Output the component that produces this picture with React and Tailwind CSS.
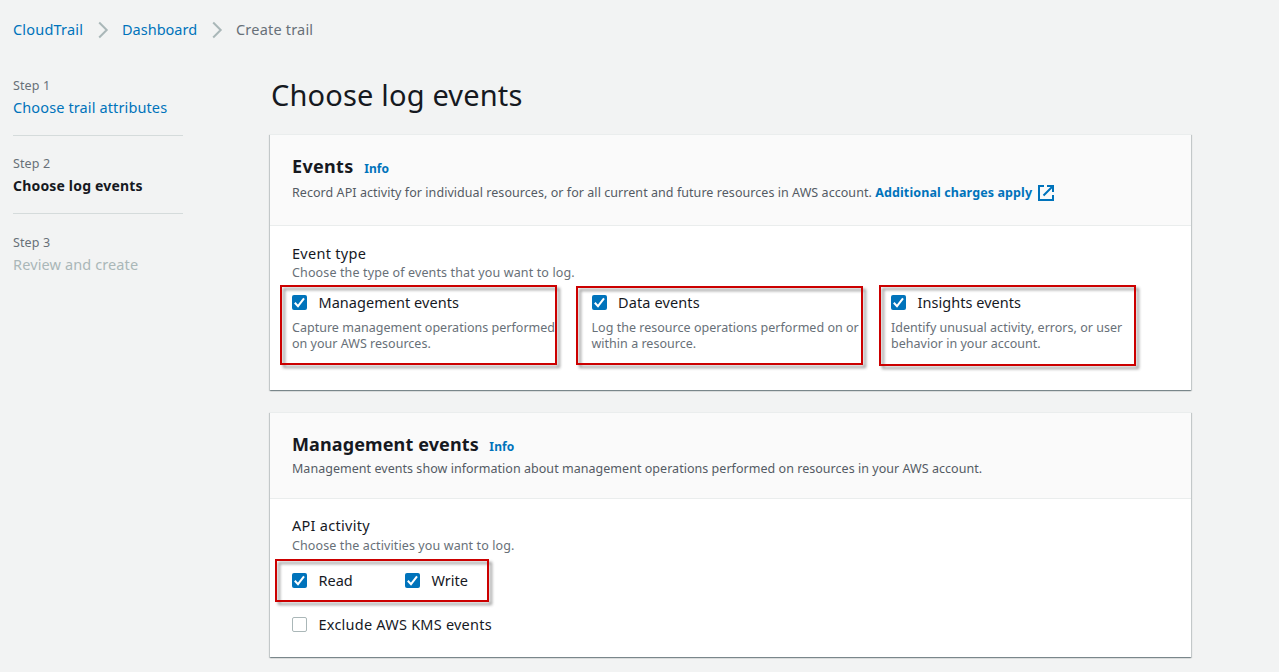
const Chevron = () => (
  <svg className="-ml-px h-[18px] w-3 shrink-0" viewBox="0 0 12 18" fill="none" stroke="#aab7b8" strokeWidth="2">
    <path d="M2.2 1.5 9.7 9 2.2 16.5" />
  </svg>
);

const External = () => (
  <svg className="ml-[6px] size-4 shrink-0" viewBox="0 0 16 16" fill="none" stroke="#0073bb" strokeWidth="2">
    <path d="M6 1H1v14h14v-5M9 1h6v6M14.5 1.5 5.5 10.5" />
  </svg>
);

function Check({ checked = true }) {
  if (!checked) return <span className="mt-[2px] size-[15px] shrink-0 rounded-[2px] border border-[#aab7b8] bg-white" />;
  return (
    <span className="mt-[2px] size-[15px] shrink-0 rounded-[2px] bg-[#0073bb]">
      <svg className="size-[15px]" viewBox="0 0 15 15" fill="none" stroke="#fff" strokeWidth="2">
        <path d="m2.8 7.8 3.2 3.4 6-7.8" />
      </svg>
    </span>
  );
}

const Option = ({ label, checked = true, className = "" }) => (
  <div className="flex h-5 items-start gap-[11.5px]">
    <Check checked={checked} />
    <span className={`text-[14.5px] leading-[18px] ${className}`}>{label}</span>
  </div>
);

const Highlight = ({ className }) => (
  <div className={`pointer-events-none absolute border-2 border-[#cc0000] drop-shadow-[3px_3px_1.5px_rgba(0,0,0,0.42)] ${className}`} />
);

const Step = ({ n, label, className, itemClass = "" }) => (
  <li className={`h-[78px] border-b border-[#d5dbdb] pt-[18px] last:border-0 ${itemClass}`}>
    <div className="text-[12.5px] leading-5 tracking-[0.1px] text-[#687078]">Step {n}</div>
    <div className={className}>{label}</div>
  </li>
);

function Card({ title, titleClass, description, descriptionClass, headerClass, className, children }) {
  return (
    <section
      className={`relative w-[921px] border-t border-[#eaeded] bg-white shadow-[0_1px_1px_0_rgba(0,28,36,0.3),1px_1px_1px_0_rgba(0,28,36,0.15),-1px_1px_1px_0_rgba(0,28,36,0.15)] ${className}`}
    >
      <header className={`border-b border-[#eaeded] bg-[#fafafa] px-[22px] pt-[17px] ${headerClass}`}>
        <div className="flex h-7 items-baseline gap-[10.5px]">
          <h2 className={`text-[18px] leading-7 font-bold ${titleClass}`}>{title}</h2>
          <a className="text-[12px] font-bold tracking-[0.1px] text-[#0073bb]">Info</a>
        </div>
        <div className={`flex h-6 items-center text-[12.5px] whitespace-pre text-[#545b64] ${descriptionClass}`}>
          {description}
        </div>
      </header>
      {children}
    </section>
  );
}

const eventTypes = [
  {
    label: "Management events",
    labelClass: "tracking-[0.04px]",
    lines: ["Capture management operations performed", "on your AWS resources."],
  },
  {
    label: "Data events",
    labelClass: "tracking-[0.12px]",
    lines: ["Log the resource operations performed on or", "within a resource."],
  },
  {
    label: "Insights events",
    labelClass: "tracking-[0.04px]",
    lines: ["Identify unusual activity, errors, or user", "behavior in your account."],
  },
];

export default function App() {
  return (
    <div className="h-[672px] w-[1279px] overflow-hidden bg-[#f2f3f3] font-['Noto_Sans',sans-serif] text-[#16191f]">
      <nav className="flex h-[60px] items-center pl-[13px] text-[14.5px] whitespace-nowrap">
        <a className="w-[85px] tracking-[0.2px] text-[#0073bb]">CloudTrail</a>
        <Chevron />
        <a className="ml-[13px] w-[90px] text-[#0073bb]">Dashboard</a>
        <Chevron />
        <span className="ml-[13px] tracking-[0.2px] text-[#687078]">Create trail</span>
      </nav>
      <div className="flex">
        <ol className="-mt-[2px] ml-[13px] w-[170px] shrink-0 whitespace-nowrap">
          <Step
            n={1}
            label="Choose trail attributes"
            className="text-[14.5px] leading-[22px] tracking-[0.12px] text-[#0073bb]"
          />
          <Step n={2} label="Choose log events" className="text-[14px] leading-6 font-bold tracking-[0.18px]" />
          <Step
            n={3}
            label="Review and create"
            className="text-[14.5px] leading-[22px] tracking-[0.12px] text-[#aab7b8]"
            itemClass="mt-px"
          />
        </ol>
        <main className="ml-[87px] whitespace-nowrap">
          <h1 className="mt-[15px] h-[59px] pl-px text-[29px] leading-10 tracking-[0.17px]">Choose log events</h1>
          <Card
            title="Events"
            titleClass="tracking-[0.33px]"
            className="h-[256px]"
            headerClass="h-[91px]"
            descriptionClass="mt-px tracking-[0.055px]"
            description={
              <>
                Record API activity for individual resources, or for all current and future resources in AWS account.{" "}
                <a className="font-bold tracking-[0.11px] text-[#0073bb]">Additional charges apply</a>
                <External />
              </>
            }
          >
            <div className="px-[22px] pt-[18px]">
              <h3 className="h-5 text-[14.5px] leading-[18px] tracking-[0.28px]">Event type</h3>
              <p className="mt-px text-[12.5px] leading-4 tracking-[0.13px] text-[#687078]">
                Choose the type of events that you want to log.
              </p>
              <div className="mt-3 grid grid-cols-[299.5px_299.5px_260px]">
                {eventTypes.map(({ label, labelClass, lines }) => (
                  <div key={label}>
                    <Option label={label} className={labelClass} />
                    <p className="mt-[7px] text-[12.5px] leading-4 tracking-[0.02px] text-[#687078]">
                      {lines[0]}
                      <br />
                      {lines[1]}
                    </p>
                  </div>
                ))}
              </div>
            </div>
            <Highlight className="top-[150px] left-[10px] h-[80px] w-[277px]" />
            <Highlight className="top-[151px] left-[306px] h-[79px] w-[287px]" />
            <Highlight className="top-[150px] left-[609px] h-[81px] w-[257px]" />
          </Card>
          <Card
            title="Management events"
            titleClass="tracking-[0.12px]"
            className="mt-[22px] h-[245px]"
            headerClass="h-[86px]"
            descriptionClass="-mt-px tracking-[0.035px]"
            description="Management events show information about management operations performed on resources in your AWS account."
          >
            <div className="px-[22px] pt-[17px]">
              <h3 className="h-5 text-[14.5px] leading-[18px] tracking-[0.28px]">API activity</h3>
              <p className="mt-[2px] text-[12.5px] leading-4 tracking-[0.11px] text-[#687078]">
                Choose the activities you want to log.
              </p>
              <div className="mt-[17px] grid grid-cols-[113px_100px]">
                <Option label="Read" />
                <Option label="Write" />
              </div>
              <div className="mt-6">
                <Option label="Exclude AWS KMS events" checked={false} className="tracking-[0.23px]" />
              </div>
            </div>
            <Highlight className="top-[146px] left-[5px] h-[43px] w-[214px]" />
          </Card>
        </main>
      </div>
    </div>
  );
}
